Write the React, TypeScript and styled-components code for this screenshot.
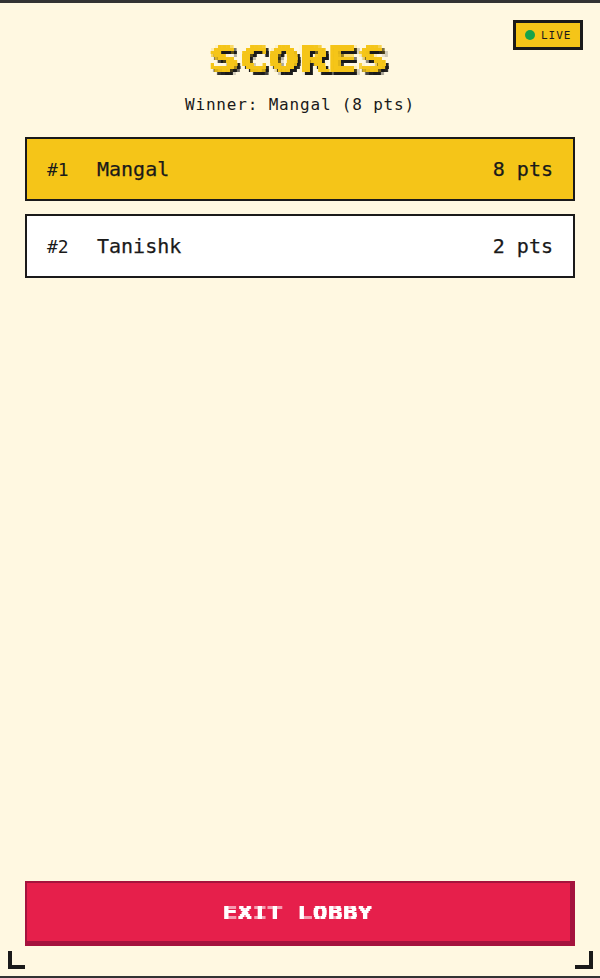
import styled, { createGlobalStyle } from 'styled-components';

const GlobalStyle = createGlobalStyle`
  html, body {
    margin: 0;
    padding: 0;
    background: #fff8e1;
  }
  * {
    box-sizing: border-box;
  }
`;

const mono = `"DejaVu Sans Mono", "Liberation Mono", monospace`;

const Screen = styled.div`
  position: relative;
  display: flex;
  flex-direction: column;
  height: 978px;
  padding: 0 25px 30px;
  background: #fff8e1;
  border-top: 3px solid #333333;
  border-bottom: 2px solid #333333;
  color: #1a1a1a;
  font-family: ${mono};
  overflow: hidden;
`;

const LiveBadge = styled.div`
  position: absolute;
  top: 17px;
  right: 17px;
  display: flex;
  align-items: center;
  gap: 6px;
  width: 70px;
  height: 30px;
  padding-left: 9px;
  background: #f5c518;
  border: 3px solid #1a1a1a;
  font-size: 11px;
  letter-spacing: 1px;
`;

const LiveDot = styled.span`
  width: 10px;
  height: 10px;
  border-radius: 50%;
  background: #16a34a;
`;

const Header = styled.header`
  display: flex;
  flex-direction: column;
  align-items: center;
  padding-top: 39px;
  margin-bottom: 20px;
`;

const Title = styled.h1`
  margin: 0;
  height: 34px;
  font-family: ${mono};
  font-size: 34px;
  line-height: 34px;
  font-weight: 700;
  color: #f5c518;
  -webkit-text-stroke: 1px #f5c518;
  transform: translateX(-2px) scaleX(1.45);
  filter: url(#pixel-title) drop-shadow(2px 3px 0 #1a1a1a);
`;

const Subtitle = styled.p`
  margin: 17px 0 0;
  font-size: 16px;
  line-height: 24px;
  letter-spacing: 0.82px;
`;

const ScoreList = styled.ul`
  display: flex;
  flex-direction: column;
  gap: 13px;
  margin: 0;
  padding: 0;
  list-style: none;
`;

const ScoreRow = styled.li<{ $winner?: boolean }>`
  display: flex;
  align-items: center;
  height: 64px;
  padding: 0 20px;
  background: ${(p) => (p.$winner ? '#f5c518' : '#ffffff')};
  border: 2px solid #1a1a1a;
`;

const Rank = styled.span`
  width: 50px;
  font-size: 18px;
`;

const Name = styled.span`
  flex: 1;
  font-size: 20px;
  -webkit-text-stroke: 0.25px #1a1a1a;
`;

const Points = styled.span`
  font-size: 20px;
  -webkit-text-stroke: 0.25px #1a1a1a;
`;

const ExitButton = styled.button`
  display: block;
  width: 100%;
  height: 65px;
  margin-top: auto;
  background: #e61f4b;
  border: solid #a5133d;
  border-width: 2px 5px 5px 2px;
  color: #ffffff;
  font-family: ${mono};
  font-size: 18px;
  font-weight: 400;
  letter-spacing: 1px;
  cursor: pointer;
`;

const ExitLabel = styled.span`
  display: inline-block;
  transform: scaleX(1.27);
  filter: url(#pixel-button);
`;

const Corner = styled.span<{ $side: 'left' | 'right' }>`
  position: absolute;
  bottom: 7px;
  ${(p) => p.$side}: ${(p) => (p.$side === 'left' ? 8 : 7)}px;
  width: ${(p) => (p.$side === 'left' ? 17 : 18)}px;
  height: 18px;
  border-bottom: 4px solid #1a1a1a;
  border-${(p) => p.$side}: 4px solid #1a1a1a;
`;

const HiddenDefs = styled.svg`
  position: absolute;
  width: 0;
  height: 0;
`;

// samples the text on a coarse grid so it reads as a bitmap font
function PixelFilter({ id, size, radius }: { id: string; size: number; radius: number }) {
  return (
    <filter id={id} x="0" y="0" width="100%" height="100%" colorInterpolationFilters="sRGB">
      <feFlood x={radius} y={radius} width="1" height="1" />
      <feComposite width={size} height={size} />
      <feTile result="grid" />
      <feComposite in="SourceGraphic" in2="grid" operator="in" />
      <feMorphology operator="dilate" radius={radius} />
    </filter>
  );
}

const scores = [
  { rank: 1, name: 'Mangal', points: 8 },
  { rank: 2, name: 'Tanishk', points: 2 },
];

function App() {
  return (
    <Screen>
      <GlobalStyle />
      <HiddenDefs aria-hidden="true">
        <PixelFilter id="pixel-title" size={3} radius={1} />
        <PixelFilter id="pixel-button" size={2} radius={1} />
      </HiddenDefs>
      <LiveBadge>
        <LiveDot />
        LIVE
      </LiveBadge>
      <Header>
        <Title>SCORES</Title>
        <Subtitle>Winner: Mangal (8 pts)</Subtitle>
      </Header>
      <ScoreList>
        {scores.map((score, i) => (
          <ScoreRow key={score.name} $winner={i === 0}>
            <Rank>#{score.rank}</Rank>
            <Name>{score.name}</Name>
            <Points>{score.points} pts</Points>
          </ScoreRow>
        ))}
      </ScoreList>
      <ExitButton>
        <ExitLabel>EXIT LOBBY</ExitLabel>
      </ExitButton>
      <Corner $side="left" />
      <Corner $side="right" />
    </Screen>
  );
}

export default App;
